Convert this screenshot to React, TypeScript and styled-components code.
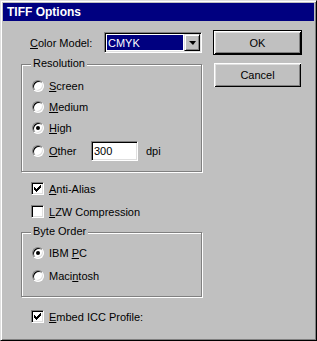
import styled, { createGlobalStyle } from "styled-components";

const GlobalStyle = createGlobalStyle`
  html, body {
    margin: 0;
    padding: 0;
    background: #c0c0c0;
  }
  body {
    font-family: "Liberation Sans", Arial, sans-serif;
    font-size: 11px;
    color: #000;
  }
`;

const Window = styled.div`
  box-sizing: border-box;
  width: 317px;
  height: 341px;
  background: #c0c0c0;
  border: 1px solid;
  border-color: #dfdfdf #000 #000 #dfdfdf;
  box-shadow: inset 1px 1px #fff, inset -1px -1px #808080;
  padding: 2px;
  display: flex;
  flex-direction: column;
`;

const TitleBar = styled.div`
  height: 18px;
  background: #000080;
  color: #fff;
  font-weight: bold;
  font-size: 12px;
  display: flex;
  align-items: center;
  padding-left: 4px;
`;

const Body = styled.div`
  display: flex;
  padding-left: 18px;
`;

const LeftColumn = styled.div`
  width: 182px;
  padding-top: 11px;
  display: flex;
  flex-direction: column;
`;

const ButtonColumn = styled.div`
  margin-left: 10px;
  padding-top: 9px;
  display: flex;
  flex-direction: column;
  align-items: flex-start;
`;

const ModelRow = styled.div`
  height: 21px;
  display: flex;
  align-items: center;
  padding-left: 9px;
`;

const FieldLabel = styled.span`
  width: 74px;
`;

const Combo = styled.div`
  box-sizing: border-box;
  width: 98px;
  height: 21px;
  background: #fff;
  border: 1px solid;
  border-color: #808080 #fff #fff #808080;
  box-shadow: inset 1px 1px #000, inset -1px -1px #dfdfdf;
  padding: 1px;
  display: flex;
`;

const ComboValue = styled.div`
  flex: 1;
  margin: 1px;
  background: #000080;
  color: #fff;
  display: flex;
  align-items: center;
  padding-left: 1px;
`;

const ComboButton = styled.div`
  box-sizing: border-box;
  width: 16px;
  background: #c0c0c0;
  border: 1px solid;
  border-color: #dfdfdf #000 #000 #dfdfdf;
  box-shadow: inset 1px 1px #fff, inset -1px -1px #808080;
  display: flex;
  align-items: center;
  justify-content: center;

  &::after {
    content: "";
    border-left: 4px solid transparent;
    border-right: 3px solid transparent;
    border-top: 4px solid #000;
    margin-top: 1px;
  }
`;

const Group = styled.div<{ $pad: string; $mt: number }>`
  position: relative;
  box-sizing: border-box;
  width: 181px;
  margin-top: ${(p) => p.$mt}px;
  border: 1px solid #808080;
  box-shadow: inset 1px 1px #fff, 1px 1px #fff;
  padding: ${(p) => p.$pad};
  display: flex;
  flex-direction: column;
`;

const Legend = styled.span`
  position: absolute;
  top: -8px;
  left: 9px;
  padding: 0 2px;
  line-height: 13px;
  background: #c0c0c0;
`;

const OptionRow = styled.div<{ $h: number; $mt?: number }>`
  height: ${(p) => p.$h}px;
  margin-top: ${(p) => p.$mt ?? 0}px;
  display: flex;
  align-items: center;
`;

const CheckRow = styled.div<{ $mt?: number }>`
  height: 23px;
  margin-top: ${(p) => p.$mt ?? 0}px;
  padding-left: 10px;
  display: flex;
  align-items: center;
`;

const OptionLabel = styled.label<{ $width?: number }>`
  display: flex;
  align-items: center;
  width: ${(p) => (p.$width ? `${p.$width}px` : "auto")};
`;

const Radio = styled.span<{ $checked?: boolean }>`
  position: relative;
  box-sizing: border-box;
  width: 12px;
  height: 12px;
  margin-right: 5px;
  border-radius: 50%;
  background: #fff;
  border: 1px solid;
  border-color: #808080 #fff #fff #808080;
  box-shadow: inset 1px 1px #000, inset -1px -1px #dfdfdf;

  &::after {
    content: "";
    display: ${(p) => (p.$checked ? "block" : "none")};
    position: absolute;
    left: 3px;
    top: 3px;
    width: 4px;
    height: 4px;
    border-radius: 50%;
    background: #000;
  }
`;

const Box = styled.span`
  box-sizing: border-box;
  width: 13px;
  height: 13px;
  margin-right: 5px;
  background: #fff;
  border: 1px solid;
  border-color: #808080 #fff #fff #808080;
  box-shadow: inset 1px 1px #000, inset -1px -1px #dfdfdf;
  display: flex;
  align-items: center;
  justify-content: center;
`;

const NumberInput = styled.div`
  box-sizing: border-box;
  width: 47px;
  height: 20px;
  background: #fff;
  border: 1px solid;
  border-color: #808080 #fff #fff #808080;
  box-shadow: inset 1px 1px #000, inset -1px -1px #dfdfdf;
  padding-left: 2px;
  display: flex;
  align-items: center;
`;

const Unit = styled.span`
  margin-left: 8px;
`;

const Button = styled.div<{ $default?: boolean }>`
  box-sizing: border-box;
  width: ${(p) => (p.$default ? 89 : 87)}px;
  height: ${(p) => (p.$default ? 25 : 24)}px;
  margin: ${(p) => (p.$default ? "0" : "8px 0 0 1px")};
  background: #c0c0c0;
  border: ${(p) => (p.$default ? "1px solid #000" : "0")};
  box-shadow: inset 1px 1px #fff, inset -1px -1px #000, inset 2px 2px #dfdfdf,
    inset -2px -2px #808080;
  display: flex;
  align-items: center;
  justify-content: center;
`;

const checkCols = [2, 3, 4, 3, 2, 1, 0];

function CheckMark() {
  return (
    <svg width="9" height="9" viewBox="0 0 9 9" shapeRendering="crispEdges">
      {checkCols.map((off, i) => (
        <rect key={i} x={1 + i} y={1 + off} width="1" height="3" fill="#000" />
      ))}
    </svg>
  );
}

function Check({ checked, children }: { checked?: boolean; children: React.ReactNode }) {
  return (
    <OptionLabel>
      <Box>{checked && <CheckMark />}</Box>
      <span>{children}</span>
    </OptionLabel>
  );
}

function RadioOption({
  checked,
  width,
  children,
}: {
  checked?: boolean;
  width?: number;
  children: React.ReactNode;
}) {
  return (
    <OptionLabel $width={width}>
      <Radio $checked={checked} />
      <span>{children}</span>
    </OptionLabel>
  );
}

export default function App() {
  return (
    <>
      <GlobalStyle />
      <Window>
        <TitleBar>TIFF Options</TitleBar>
        <Body>
          <LeftColumn>
            <ModelRow>
              <FieldLabel>
                <u>C</u>olor Model:
              </FieldLabel>
              <Combo>
                <ComboValue>CMYK</ComboValue>
                <ComboButton />
              </Combo>
            </ModelRow>

            <Group $pad="10px 10px 10px" $mt={11}>
              <Legend>Resolution</Legend>
              <OptionRow $h={21}>
                <RadioOption>
                  <u>S</u>creen
                </RadioOption>
              </OptionRow>
              <OptionRow $h={21}>
                <RadioOption>
                  <u>M</u>edium
                </RadioOption>
              </OptionRow>
              <OptionRow $h={21}>
                <RadioOption checked>
                  <u>H</u>igh
                </RadioOption>
              </OptionRow>
              <OptionRow $h={21} $mt={2}>
                <RadioOption width={59}>
                  <u>O</u>ther
                </RadioOption>
                <NumberInput>300</NumberInput>
                <Unit>dpi</Unit>
              </OptionRow>
            </Group>

            <CheckRow $mt={5}>
              <Check checked>
                <u>A</u>nti-Alias
              </Check>
            </CheckRow>
            <CheckRow>
              <Check>
                <u>L</u>ZW Compression
              </Check>
            </CheckRow>

            <Group $pad="8px 10px 9px" $mt={9}>
              <Legend>Byte Order</Legend>
              <OptionRow $h={23}>
                <RadioOption checked>
                  IBM <u>P</u>C
                </RadioOption>
              </OptionRow>
              <OptionRow $h={23}>
                <RadioOption>
                  Maci<u>n</u>tosh
                </RadioOption>
              </OptionRow>
            </Group>

            <CheckRow $mt={8}>
              <Check checked>
                <u>E</u>mbed ICC Profile:
              </Check>
            </CheckRow>
          </LeftColumn>

          <ButtonColumn>
            <Button $default>OK</Button>
            <Button>Cancel</Button>
          </ButtonColumn>
        </Body>
      </Window>
    </>
  );
}
